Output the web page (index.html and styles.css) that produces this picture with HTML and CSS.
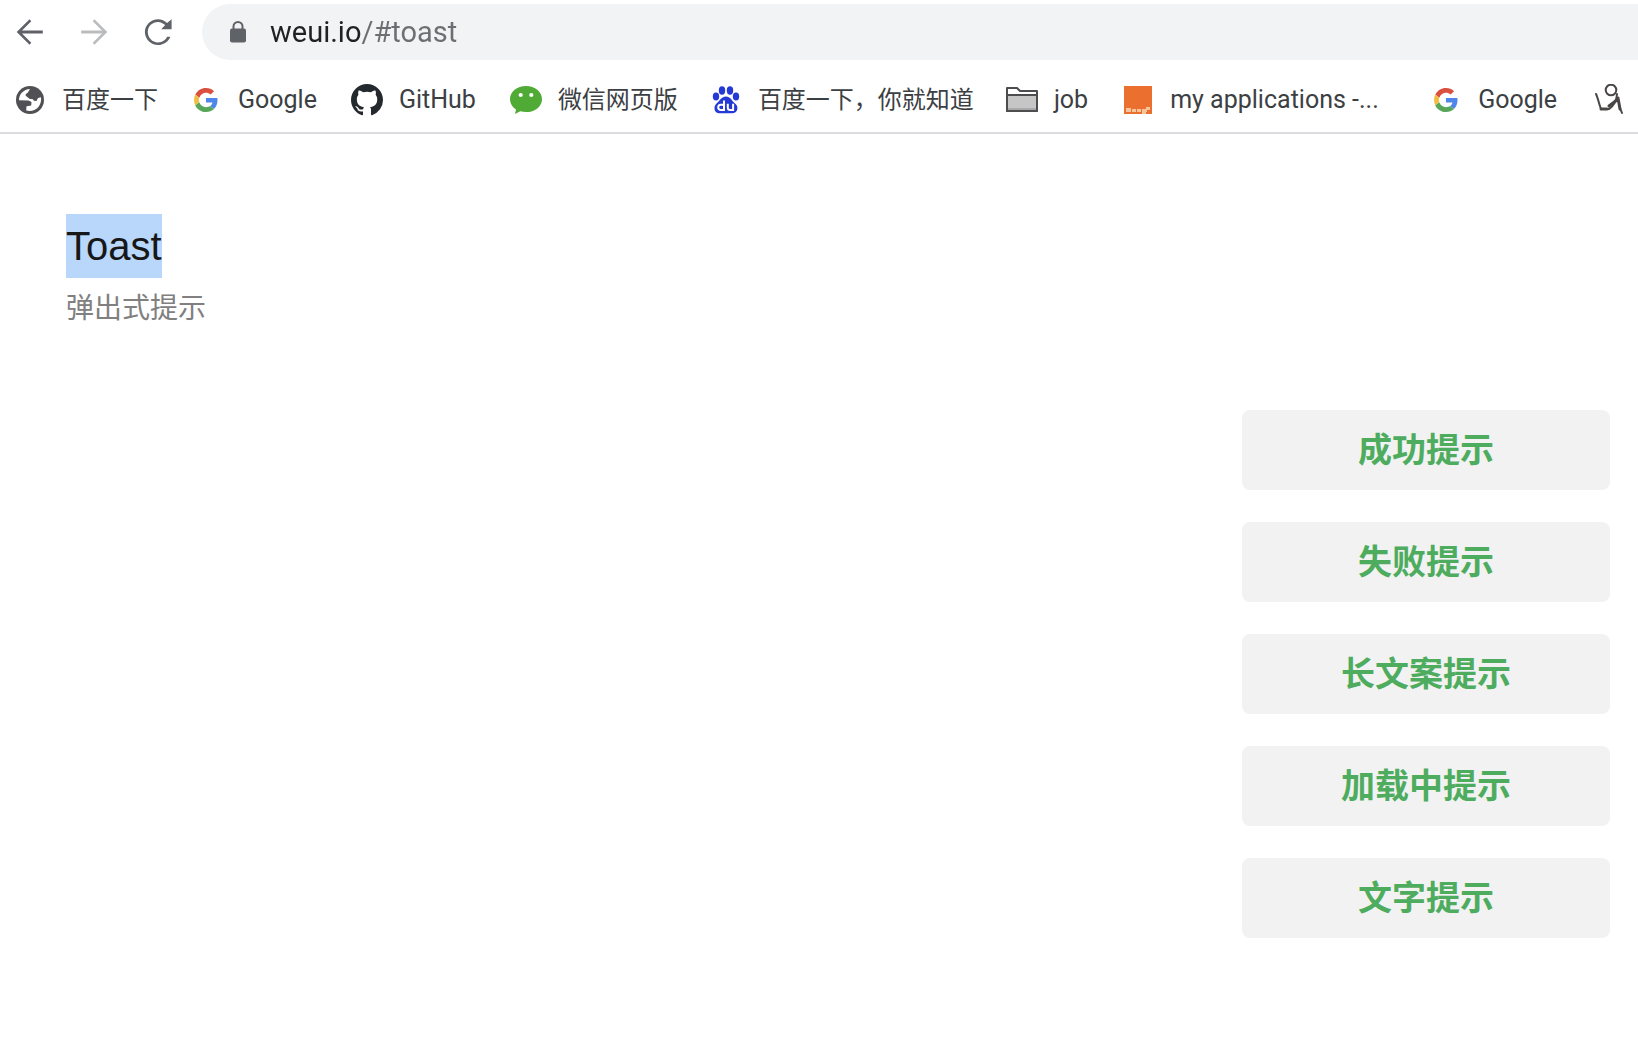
FILE: index.html
```html
<!DOCTYPE html>
<html lang="zh-CN">
<head>
<meta charset="utf-8">
<title>Toast</title>
<link rel="stylesheet" href="styles.css">
</head>
<body>
<svg class="defs" aria-hidden="true">
  <symbol id="google" viewBox="0 0 48 48">
    <path fill="#d9503f" d="M24 9.500c3.540 0 6.710 1.220 9.210 3.600l6.850-6.850C35.900 2.380 30.470 0 24 0 14.620 0 6.510 5.380 2.560 13.220l7.980 6.190C12.430 13.720 17.740 9.500 24 9.500z"/>
    <path fill="#4f86ec" d="M46.980 24.550c0-1.570-.15-3.090-.38-4.550H24v9.020h12.940c-.58 2.960-2.260 5.480-4.780 7.180l7.730 6c4.510-4.180 7.090-10.360 7.090-17.650z"/>
    <path fill="#f2be42" d="M10.530 28.590c-.48-1.450-.76-2.990-.76-4.590s.27-3.140.76-4.590l-7.980-6.190C.92 16.460 0 20.120 0 24s.92 7.540 2.560 10.780l7.970-6.190z"/>
    <path fill="#57a65a" d="M24 48c6.480 0 11.930-2.130 15.890-5.810l-7.730-6c-2.150 1.450-4.920 2.300-8.160 2.300-6.260 0-11.570-4.220-13.470-9.910l-7.980 6.190C6.510 42.620 14.620 48 24 48z"/>
  </symbol>
</svg>
<header class="browser">
  <div class="toolbar">
    <nav class="nav" aria-label="导航">
      <button class="nav-button" type="button" aria-label="后退"><svg viewBox="2 2 20 20"><path d="M20 11.100H7l5.800-5.800L11.700 4 3.700 12l8 8 1.100-1.300L7 12.900h13z"/></svg></button>
      <button class="nav-button nav-button-disabled" type="button" aria-label="前进"><svg viewBox="2 2 20 20"><path d="M4 11.100h13l-5.800-5.800L12.300 4l8 8-8 8-1.100-1.300 5.800-5.800H4z"/></svg></button>
      <button class="nav-button" type="button" aria-label="重新加载"><svg viewBox="2 2 20 20"><path d="M17.650 6.350C16.200 4.900 14.210 4 12 4c-4.420 0-8.200 3.580-8.200 8s3.780 8.200 8.200 8.200c3.730 0 6.840-2.550 7.730-5.200h-2.080c-.82 2-3.040 3.500-5.650 3.500-3.500 0-6.400-2.890-6.400-6.500S8.500 5.700 12 5.700c1.800 0 3.300.8 4.500 2L14 10.300h6.500V4z"/></svg></button>
    </nav>
    <div class="omnibox">
      <svg class="lock" viewBox="0 0 16 22"><path fill="none" stroke="#5f6368" stroke-width="2" d="M3.500 9V5.500a4.500 4.500 0 0 1 9 0V9"/><rect y="7.500" width="16" height="14" rx="2" fill="#5f6368"/></svg>
      <input class="url" type="text" aria-label="地址" value="weui.io/#toast">
    </div>
  </div>
  <nav class="bookmarks" aria-label="书签">
    <a class="bookmark" href="#"><svg viewBox="0 0 32 32"><circle cx="16" cy="16" r="14" fill="#505055"/><path fill="#fff" d="M5 16.200C5 10 9.500 5.500 16 5l-1.500 2.500-1 1.500c-1.500.5-2 1.500-1.800 2.700L14 13.500c1 1.300 2.300 1.600 4.500 1.500l1.500 1.800 2.500.2 1.500-3 3-.8C28 20 23.500 27 15.500 27l-3.300-.5.300-4.300 4.700-.7.300-3.500-3-1.500z"/></svg><span>百度一下</span></a>
    <a class="bookmark bookmark-latin" href="#"><svg viewBox="-8 -8 64 64"><use href="#google" width="48" height="48"/></svg><span>Google</span></a>
    <a class="bookmark bookmark-latin" href="#"><svg viewBox="0 0 16 16"><path fill="#24292e" d="M8 0C3.580 0 0 3.580 0 8c0 3.540 2.290 6.530 5.470 7.590.4.07.55-.17.55-.38 0-.19-.01-.82-.01-1.490-2.010.37-2.530-.49-2.690-.94-.09-.23-.48-.94-.82-1.130-.28-.15-.68-.52-.01-.53.63-.01 1.080.58 1.230.82.72 1.210 1.870.87 2.330.66.07-.52.28-.87.51-1.070-1.780-.2-3.640-.89-3.640-3.950 0-.87.31-1.590.82-2.150-.08-.2-.36-1.020.08-2.120 0 0 .67-.21 2.200.82.64-.18 1.320-.27 2-.27s1.360.09 2 .27c1.530-1.040 2.200-.82 2.200-.82.44 1.100.16 1.920.08 2.120.51.56.82 1.270.82 2.150 0 3.070-1.870 3.750-3.650 3.950.29.25.54.73.54 1.480 0 1.070-.01 1.930-.01 2.200 0 .21.15.46.55.38A8.010 8.010 0 0 0 16 8c0-4.420-3.580-8-8-8z"/></svg><span>GitHub</span></a>
    <a class="bookmark" href="#"><svg viewBox="0 0 32 32"><path fill="#4fab35" d="M16 2C7 2 0 7.700 0 15.200c0 4.200 2.300 7.900 6 10.300L5 30l5.300-2.700c1.800.5 3.700.8 5.700.8 9 0 16-5.600 16-12.900S25 2 16 2z"/><circle cx="10.700" cy="11" r="2.100" fill="#fff"/><circle cx="21.300" cy="11" r="2.100" fill="#fff"/></svg><span>微信网页版</span></a>
    <a class="bookmark" href="#"><svg viewBox="0 0 32 32"><g fill="#2439d6"><ellipse cx="6" cy="12.500" rx="3.200" ry="4"/><ellipse cx="12" cy="6.500" rx="3.200" ry="4.200"/><ellipse cx="20" cy="6.500" rx="3.200" ry="4.200"/><ellipse cx="26" cy="12.500" rx="3.200" ry="4"/><path d="M16 12.500c4.500 0 5.500 4 8.500 6.500 5 3.500 3.300 10.300-2.500 10.300H9.500c-5.500 0-6.700-6.800-2.500-10.300 3-2.500 4.500-6.500 9-6.500z"/></g><path fill="none" stroke="#fff" stroke-width="2" d="M14 16.500v9.500h-3.200a2.600 2.600 0 0 1 0-5.200H14M17.800 19.800v4q0 2.200 2.300 2.200h3v-6.200"/></svg><span>百度一下，你就知道</span></a>
    <a class="bookmark bookmark-latin" href="#"><svg viewBox="0 0 32 32"><path fill="#fff" stroke="#4d4d4f" stroke-width="2" stroke-linejoin="round" d="M1 27V4h10l3 3h17v20z"/><path fill="#c6c6c6" stroke="#4d4d4f" stroke-width="2" stroke-linejoin="round" d="M1 11h30v16H1z"/><path fill="#a9a9a9" d="M2 24h28v2H2z"/></svg><span>job</span></a>
    <a class="bookmark bookmark-latin bookmark-long" href="#"><svg viewBox="0 0 32 32"><path fill="#eb7030" d="M2 2h28v28H2z"/><path fill="#f6c49b" d="M4 24h5v4H4zM10 25h4v3h-4zM15 25h4v3h-4zM20 25h4v5h-4zM24 23h4v3h-3v2h-1z"/></svg><span>my applications -...</span></a>
    <a class="bookmark bookmark-latin" href="#"><svg viewBox="-8 -8 64 64"><use href="#google" width="48" height="48"/></svg><span>Google</span></a>
    <a class="bookmark" href="#" aria-label="书签"><svg viewBox="0 0 32 32"><g fill="none" stroke="#4a4646" stroke-linecap="round"><circle cx="20" cy="6" r="5.300" stroke-width="2"/><path stroke-width="2" d="M5 10c2 4 3 10 5 15h8c4-2 8-9 8-15"/><path stroke-width="3" d="M10 25h6M18 22l8-6M27 14l2 11"/><path stroke-width="2" d="M29 24l2 5"/></g></svg></a>
  </nav>
</header>
<main class="page">
  <h1 class="title"><span class="selected">Toast</span></h1>
  <p class="desc">弹出式提示</p>
  <div class="actions">
    <button class="action" type="button">成功提示</button>
    <button class="action" type="button">失败提示</button>
    <button class="action" type="button">长文案提示</button>
    <button class="action" type="button">加载中提示</button>
    <button class="action" type="button">文字提示</button>
  </div>
</main>
</body>
</html>
```
FILE: styles.css
```css
* {
  box-sizing: border-box;
}

body {
  margin: 0;
  background: #fff;
  font-family: "Liberation Sans", "Noto Sans CJK SC", sans-serif;
}

.defs {
  display: none;
}

.browser {
  overflow: hidden;
  border-bottom: 2px solid #dadce0;
  font-family: Roboto, "Noto Sans CJK SC", sans-serif;
}

.toolbar {
  display: flex;
  align-items: center;
  gap: 28px;
  padding: 4px 0 0 14px;
}

.nav {
  display: flex;
  gap: 32px;
}

.nav-button {
  width: 32px;
  height: 32px;
  padding: 0;
  border: 0;
  background: none;
  fill: #5f6368;
}

.nav-button-disabled {
  fill: #babcbe;
}

.nav-button svg {
  display: block;
}

.omnibox {
  display: flex;
  flex: 1;
  align-items: center;
  gap: 24px;
  height: 56px;
  padding-left: 28px;
  border-radius: 28px 0 0 28px;
  background: #f1f3f4;
}

.lock {
  width: 16px;
  height: 22px;
}

/* The host is dark, the rest of the address grey. */
.url {
  flex: 1;
  min-width: 0;
  height: 40px;
  padding: 0;
  border: 0;
  outline: 0;
  background: linear-gradient(to right, #202124 92px, #6b6e72 92px) text;
  color: transparent;
  font: 29px/40px Roboto, sans-serif;
}

.bookmarks {
  display: flex;
  align-items: center;
  gap: 32px;
  height: 72px;
  padding: 8px 0 0 14px;
}

.bookmark {
  display: flex;
  flex: none;
  align-items: center;
  gap: 16px;
  color: #3c4043;
  font-size: 24px;
  line-height: 32px;
  text-decoration: none;
  white-space: nowrap;
}

.bookmark-latin {
  padding-right: 2px;
  font-size: 25px;
}

.bookmark svg {
  width: 32px;
  height: 32px;
}

.bookmark-long span {
  width: 226px;
}

.page {
  padding: 80px 28px 80px 66px;
}

.title {
  margin: 0;
  color: #171717;
  font-size: 40px;
  font-weight: 400;
  line-height: 64px;
}

.selected {
  display: inline-block;
  background: #b9d6fb;
}

.desc {
  margin: 8px 0 0;
  color: #808080;
  font-size: 28px;
  line-height: 46px;
}

.actions {
  display: flex;
  flex-direction: column;
  align-items: flex-end;
  gap: 32px;
  margin-top: 78px;
}

.action {
  width: 368px;
  height: 80px;
  padding: 0;
  border: 0;
  border-radius: 8px;
  background: #f2f2f2;
  color: #4eac5f;
  font-family: inherit;
  font-size: 34px;
  font-weight: 700;
  line-height: 48px;
}
```
